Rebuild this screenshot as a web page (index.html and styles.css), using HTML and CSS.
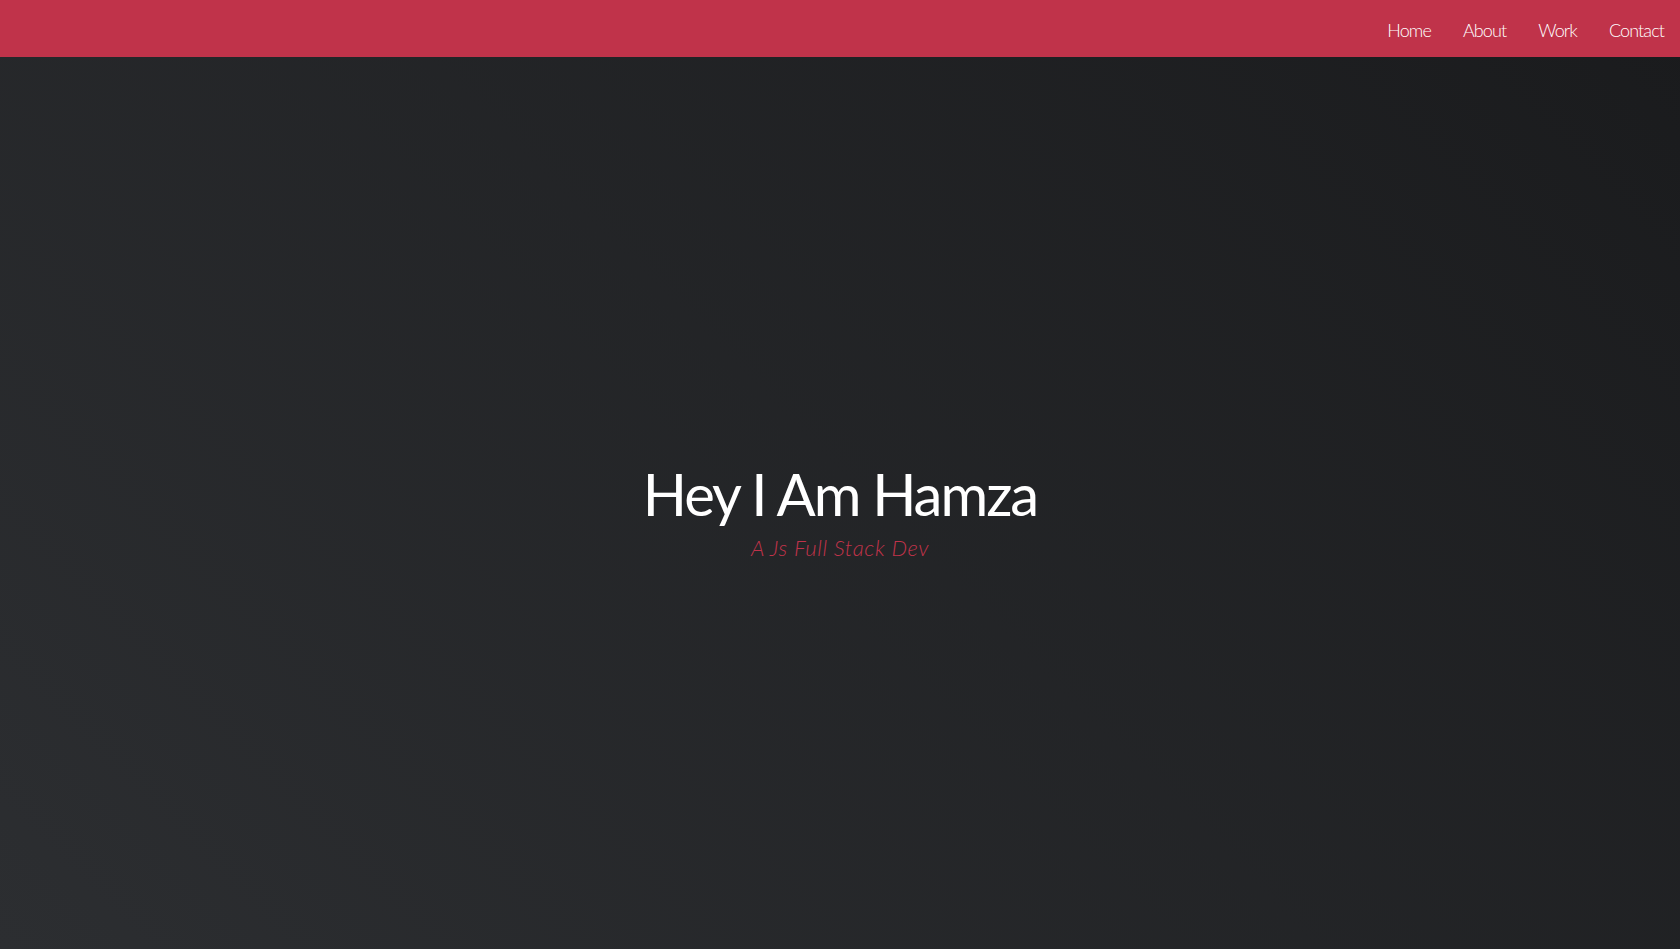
FILE: index.html
```html
<!DOCTYPE html>
<html lang="en">
<head>
<meta charset="utf-8">
<title>Hamza</title>
<link rel="stylesheet" href="styles.css">
</head>
<body>
<header class="navbar">
  <nav class="nav">
    <a class="nav-link" href="#">Home</a>
    <a class="nav-link" href="#">About</a>
    <a class="nav-link" href="#">Work</a>
    <a class="nav-link" href="#">Contact</a>
  </nav>
</header>
<main class="hero">
  <h1 class="hero-title">Hey I Am Hamza</h1>
  <p class="hero-subtitle">A Js Full Stack Dev</p>
</main>
</body>
</html>
```
FILE: styles.css
```css
* { box-sizing: border-box; }
html, body { margin: 0; padding: 0; height: 100%; }
body {
  font-family: Lato, "Open Sans", sans-serif;
  background: linear-gradient(45deg, #2c2e31 0%, #1a1b1d 100%);
  display: flex;
  flex-direction: column;
  min-height: 100vh;
}
.navbar {
  height: 57px;
  background: #c0334a;
  display: flex;
  justify-content: flex-end;
  align-items: center;
  padding-right: 16px;
  padding-top: 3px;
}
.nav { display: flex; gap: 32px; }
.nav-link {
  color: #ffffff;
  text-decoration: none;
  font-size: 18px;
  font-weight: 300;
  letter-spacing: -0.9px;
}
.hero {
  flex: 1;
  display: flex;
  flex-direction: column;
  align-items: center;
  justify-content: center;
  padding-top: 14px;
}
.hero-title {
  margin: 0;
  color: #ffffff;
  font-size: 58px;
  font-weight: 400;
  letter-spacing: -2px;
  line-height: 1.2;
}
.hero-subtitle {
  margin: 6px 0 0;
  color: #c0334a;
  font-size: 22px;
  font-style: italic;
  font-weight: 300;
  letter-spacing: 0.6px;
}
```
